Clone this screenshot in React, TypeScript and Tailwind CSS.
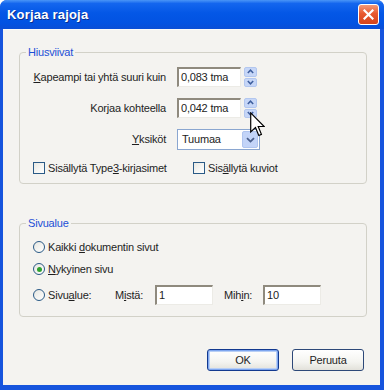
import React from "react";

const Spinner = () => (
  <div className="ml-[3px] w-[13px] h-[20px] flex flex-col gap-[1px]">
    <div className="flex-1 rounded-[2px] border border-[#b3c7ef] bg-[#c6d6f7] flex items-center justify-center">
      <svg width="7" height="5" viewBox="0 0 7 5"><path d="M0.8 4 L3.5 1.2 L6.2 4" fill="none" stroke="#3f5f9e" strokeWidth="1.5" /></svg>
    </div>
    <div className="flex-1 rounded-[2px] border border-[#b3c7ef] bg-[#c6d6f7] flex items-center justify-center">
      <svg width="7" height="5" viewBox="0 0 7 5"><path d="M0.8 1 L3.5 3.8 L6.2 1" fill="none" stroke="#3f5f9e" strokeWidth="1.5" /></svg>
    </div>
  </div>
);

const TextBox = ({ value, w }: { value: string; w: string }) => (
  <div className={`${w} h-[20px] bg-white border-t-[2px] border-l-[2px] border-r border-b border-t-[#8f8a7e] border-l-[#8f8a7e] border-r-[#ecebe6] border-b-[#ecebe6] flex items-center pl-[2px] text-[#222]`}>
    {value}
  </div>
);

const Checkbox = () => (
  <div className="w-[12px] h-[12px] shrink-0 border border-[#2a5a86] bg-[linear-gradient(135deg,#e8e8e3,#ffffff)]" />
);

const Radio = ({ checked }: { checked?: boolean }) => (
  <div className="w-[12px] h-[12px] shrink-0 rounded-full border border-[#2a5a86] bg-[linear-gradient(135deg,#e6e6e0,#ffffff)] flex items-center justify-center">
    {checked && <div className="w-[5px] h-[5px] rounded-full bg-[#2fa22f]" />}
  </div>
);

export default function App() {
  return (
    <div className="w-[384px] h-[390px] relative bg-[#1654dd] rounded-t-[7px] flex flex-col overflow-hidden font-['Liberation_Sans',Arial,sans-serif] text-[11px] tracking-[-0.2px] whitespace-nowrap text-[#1e1e1e]">
      {/* Title bar */}
      <div className="h-[29px] shrink-0 flex items-center justify-between pl-[7px] pr-[5px] bg-[linear-gradient(180deg,#4a95f7_0%,#1466ee_12%,#0457e6_45%,#0252e2_80%,#0a4ed6_100%)]">
        <span className="text-white font-bold text-[13px] tracking-[0.2px] [text-shadow:1px_1px_0_#0b2f8f]">Korjaa rajoja</span>
        <div className="w-[21px] h-[21px] rounded-[3px] border border-white bg-[linear-gradient(180deg,#f39a78_0%,#e8592f_45%,#d4431c_100%)] flex items-center justify-center">
          <svg width="11" height="11" viewBox="0 0 11 11">
            <path d="M1.5 1.5 L9.5 9.5 M9.5 1.5 L1.5 9.5" stroke="white" strokeWidth="2.2" strokeLinecap="square" />
          </svg>
        </div>
      </div>

      {/* Client area */}
      <div className="flex-1 ml-[3px] mr-[4px] mb-[5px] bg-[#f4f3f0] border-t border-[#fafafa] flex flex-col">
        {/* Hiusviivat */}
        <div className="relative mt-[22px] ml-[16px] mr-[13px] border border-[#d2d1c8] rounded-[4px] pt-[14px] pb-[8px] pl-[13px] flex flex-col gap-[11px]">
          <span className="absolute -top-[7px] left-[6px] px-[2px] bg-[#f4f3f0] text-[#1c4fd6] leading-[13px]">Hiusviivat</span>
          <div className="flex items-center h-[20px]">
            <div className="w-[133px] flex justify-end"><span><u>K</u>apeampi tai yhtä suuri kuin</span></div>
            <div className="ml-[11px]"><TextBox value="0,083 tma" w="w-[64px]" /></div>
            <Spinner />
          </div>
          <div className="flex items-center h-[20px]">
            <div className="w-[133px] flex justify-end"><span>Kor<u>j</u>aa kohteella</span></div>
            <div className="ml-[11px]"><TextBox value="0,042 tma" w="w-[64px]" /></div>
            <Spinner />
          </div>
          <div className="flex items-center h-[21px]">
            <div className="w-[133px] flex justify-end"><span><u>Y</u>ksiköt</span></div>
            <div className="ml-[11px] w-[83px] h-[21px] bg-white border border-[#8aa6d0] flex items-center justify-between pl-[4px] pr-[1px]">
              <span>Tuumaa</span>
              <div className="w-[16px] h-[17px] rounded-[2px] bg-[#c3d4f8] border border-[#b0c5ef] flex items-center justify-center">
                <svg width="9" height="6" viewBox="0 0 9 6"><path d="M1 1.2 L4.5 4.6 L8 1.2" fill="none" stroke="#4a5f8c" strokeWidth="1.8" /></svg>
              </div>
            </div>
          </div>
          <div className="flex items-center h-[14px]">
            <div className="w-[160px] flex items-center gap-[3px]">
              <Checkbox />
              <span>Sisällytä Type<u>3</u>-kirjasimet</span>
            </div>
            <div className="flex items-center gap-[3px]">
              <Checkbox />
              <span>Sis<u>ä</u>llytä kuviot</span>
            </div>
          </div>
        </div>

        {/* Sivualue */}
        <div className="relative mt-[39px] ml-[16px] mr-[13px] border border-[#d2d1c8] rounded-[4px] pt-[16px] pb-[11px] pl-[13px] flex flex-col gap-[8px]">
          <span className="absolute -top-[7px] left-[6px] px-[2px] bg-[#f4f3f0] text-[#1c4fd6] leading-[13px]">Sivualue</span>
          <div className="flex items-center gap-[3px] h-[14px]">
            <Radio />
            <span>Kaikki <u>d</u>okumentin sivut</span>
          </div>
          <div className="flex items-center gap-[3px] h-[14px]">
            <Radio checked />
            <span><u>N</u>ykyinen sivu</span>
          </div>
          <div className="flex items-center h-[20px] mt-[1px]">
            <div className="w-[82px] flex items-center gap-[3px]">
              <Radio />
              <span>Sivu<u>a</u>lue:</span>
            </div>
            <span className="w-[40px]">M<u>i</u>stä:</span>
            <TextBox value="1" w="w-[58px]" />
            <span className="ml-[11px] w-[39px]">Mih<u>i</u>n:</span>
            <TextBox value="10" w="w-[58px]" />
          </div>
        </div>

        {/* Buttons */}
        <div className="mt-[32px] mr-[16px] flex justify-end gap-[13px]">
          <button className="w-[72px] h-[22px] rounded-[3px] border border-[#12398f] bg-[linear-gradient(180deg,#ffffff_0%,#f4f4f0_60%,#e2e1da_100%)] shadow-[inset_0_0_0_1px_#7ea6ef,inset_0_0_0_2px_#b8cff5] text-[#1e1e1e]">
            OK
          </button>
          <button className="w-[72px] h-[22px] rounded-[3px] border border-[#2d4878] bg-[linear-gradient(180deg,#ffffff_0%,#f4f4f0_60%,#e2e1da_100%)] text-[#1e1e1e]">
            Peruuta
          </button>
        </div>
      </div>

      {/* Mouse cursor */}
      <svg className="absolute left-[250px] top-[112px]" width="15" height="25" viewBox="-0.6 -0.6 12.6 20.6">
        <path d="M0 0 L0 16 L4 12.3 L6.8 19 L9 18 L6.3 11.4 L11.3 11.4 Z" fill="white" stroke="black" strokeWidth="1" strokeLinejoin="miter" />
      </svg>
    </div>
  );
}
